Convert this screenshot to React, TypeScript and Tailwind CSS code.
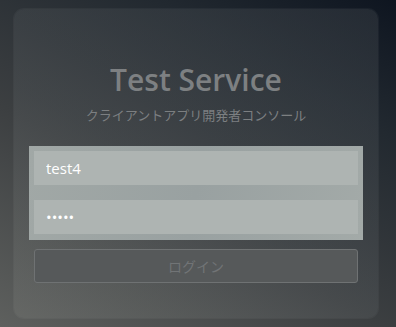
import React, { useState } from 'react';

const App: React.FC = () => {
  const [user, setUser] = useState('test4');
  const [pass, setPass] = useState('12345');

  return (
    <div
      className="h-[327px] w-[396px] overflow-hidden bg-[linear-gradient(30deg,#5e605e_0%,#3c3f41_40%,#222930_75%,#0e1520_100%)] px-[14px] pt-[9px] pb-[9px]"
      style={{ fontFamily: '"Open Sans", "Noto Sans CJK JP", sans-serif' }}
    >
      <div className="flex h-[309px] w-[364px] flex-col items-center rounded-[10px] bg-[linear-gradient(30deg,rgba(120,122,118,0.35)_0%,rgba(90,95,98,0.3)_45%,rgba(60,66,72,0.45)_100%)] shadow-[0_0_0_1px_rgba(255,255,255,0.04)]">
        {/* Header */}
        <h1 className="mt-[53px] text-[30px] leading-[36px] font-semibold text-[#7d8082]">Test Service</h1>
        <p className="mt-[8px] text-[13px] leading-[18px] text-[#7c7f81]" style={{ fontFamily: '"Noto Sans CJK JP", sans-serif' }}>
          クライアントアプリ開発者コンソール
        </p>

        {/* Form */}
        <div className="mt-[22px] flex w-[334px] flex-col gap-[15px] bg-[linear-gradient(100deg,#a1a8a6_0%,#99a1a1_50%,#a3aaa8_100%)] px-[5px] pt-[5px] pb-[6px]">
          <input
            value={user}
            onChange={(e) => setUser(e.target.value)}
            className="h-[34px] w-full bg-[#aeb4b2] px-3 text-[15px] text-white outline-none"
          />
          <input
            type="password"
            value={pass}
            onChange={(e) => setPass(e.target.value)}
            className="h-[34px] w-full bg-[#aeb4b2] px-3 text-[15px] text-white outline-none"
          />
        </div>

        <button
          disabled
          className="mt-[9px] h-[34px] w-[324px] rounded-[3px] border border-[#6f7273] bg-[#56595a] text-[14px] text-[#717476]"
          style={{ fontFamily: '"Noto Sans CJK JP", sans-serif' }}
        >
          ログイン
        </button>
      </div>
    </div>
  );
};

export default App;
